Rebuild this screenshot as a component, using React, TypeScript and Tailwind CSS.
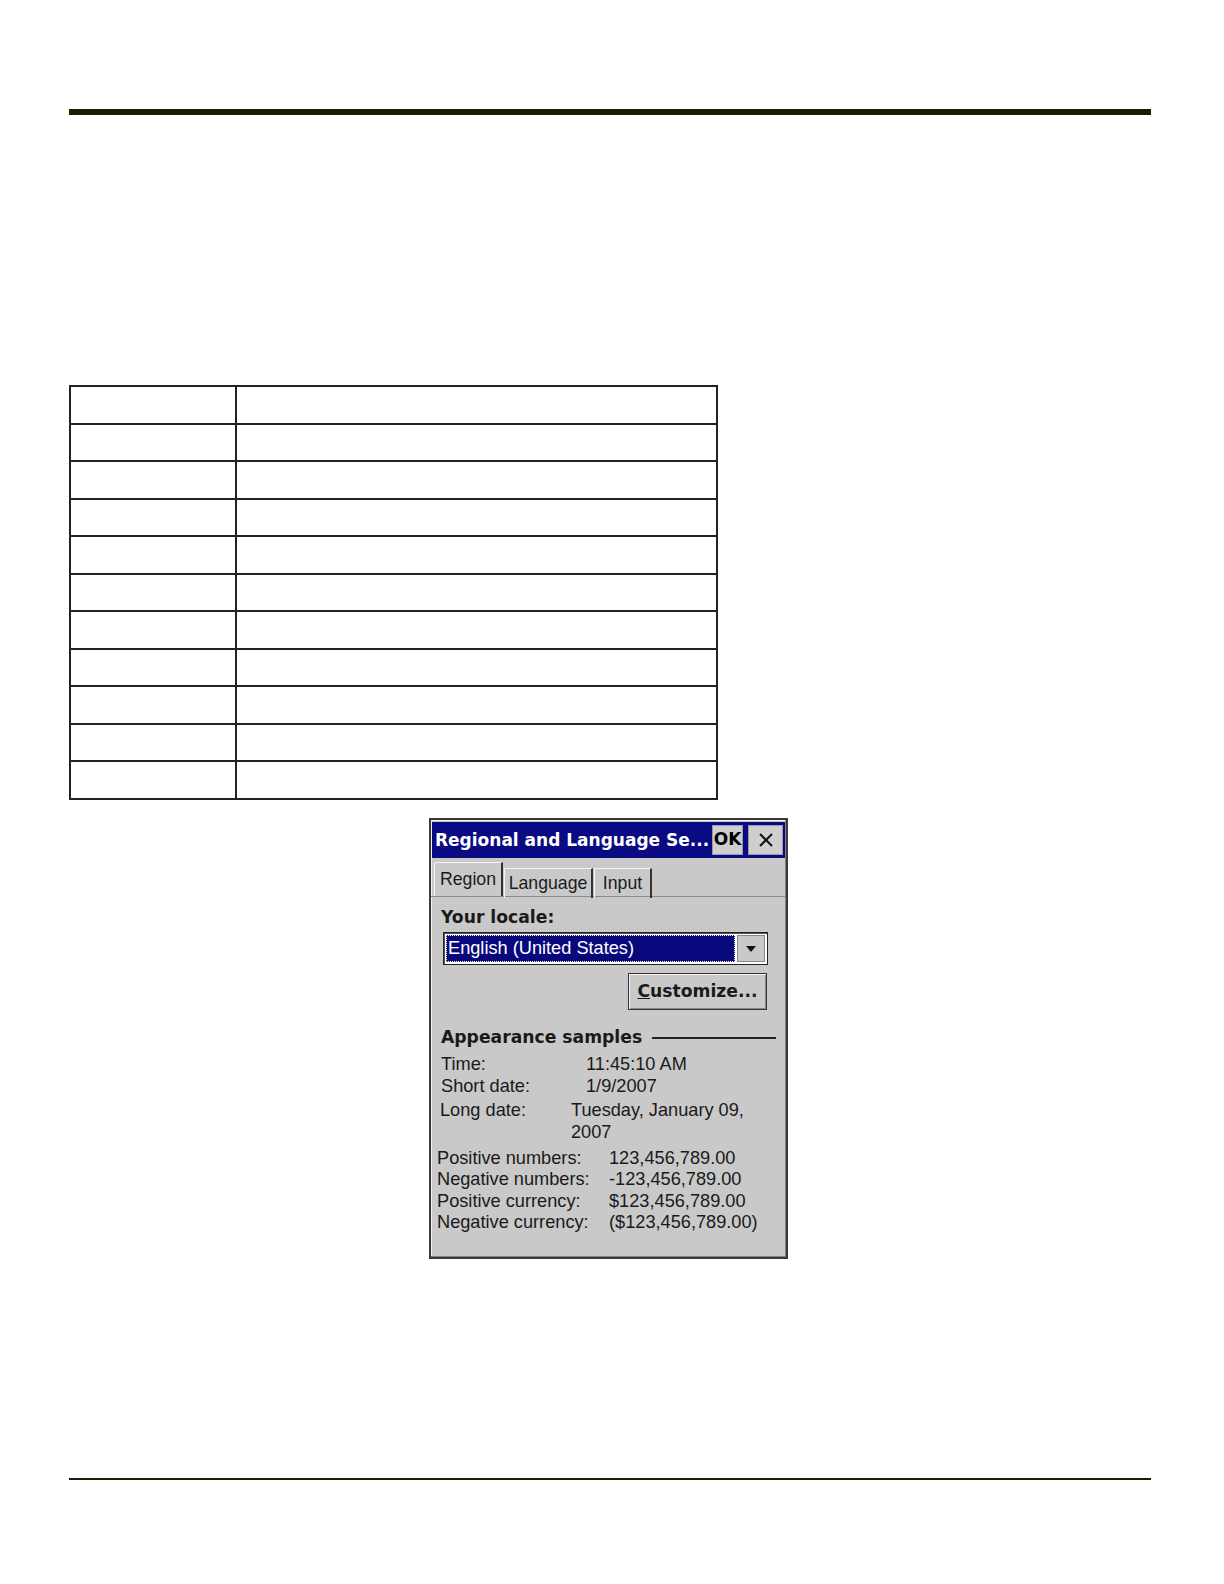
import React from 'react';

const ui = { fontFamily: '"Liberation Sans", Arial, sans-serif' };
const uiBold = { fontFamily: '"DejaVu Sans", Verdana, sans-serif' };

const rows = Array.from({ length: 11 });

const Samples: [string, string][] = [
  ['Positive numbers:', '123,456,789.00'],
  ['Negative numbers:', '-123,456,789.00'],
  ['Positive currency:', '$123,456,789.00'],
  ['Negative currency:', '($123,456,789.00)'],
];

function Dialog() {
  return (
    <div className="w-[359px] h-[441px] ml-[429px] mt-[18px] border-2 border-[#3a3a3a] bg-[#c9c9c9] flex flex-col shadow-[inset_-1px_-1px_0_#808080,inset_1px_1px_0_#f0f0f0]" style={ui}>
      {/* title bar */}
      <div className="mx-[1px] mt-[2px] h-[36px] bg-[#0a0a82] flex items-center pl-[3px] pr-[2px]">
        <div className="flex-1 min-w-0 text-white font-bold text-[17px] leading-none whitespace-nowrap" style={uiBold}>
          Regional and Language Se...
        </div>
        <div className="shrink-0 w-[31px] h-[30px] bg-[#cfcfcf] flex items-center justify-center font-bold text-[17px] text-black border border-[#9a9a9a]" style={uiBold}>OK</div>
        <div className="shrink-0 w-[35px] h-[30px] bg-[#cfcfcf] flex items-center justify-center text-black border border-[#9a9a9a] ml-[5px]">
          <svg width="16" height="16" viewBox="0 0 16 16"><path d="M2 2 L14 14 M14 2 L2 14" stroke="#111" strokeWidth="2" /></svg>
        </div>
      </div>
      {/* tabs */}
      <div className="flex items-end h-[39px] px-[3px] border-b border-[#8a8a8a] text-[17.7px] text-[#1a1a1a]">
        <div className="h-[34px] w-[69px] border-t border-l border-[#f4f4f4] border-r-2 border-r-[#333] flex items-center justify-center rounded-tl-[2px]">Region</div>
        <div className="h-[30px] w-[89px] border-l border-t border-[#f4f4f4] border-r-2 border-r-[#333] flex items-center justify-center mb-[-2px] ml-[1px]">Language</div>
        <div className="h-[30px] w-[58px] border-l border-t border-[#f4f4f4] border-r-2 border-r-[#333] flex items-center justify-center mb-[-2px] ml-[1px]">Input</div>
      </div>
      {/* body */}
      <div className="flex flex-col px-[10px] pt-[10px] text-[18.2px] text-[#1a1a1a]">
        <div className="font-bold text-[17.2px] leading-[21px]" style={uiBold}>Your locale:</div>
        <div className="mt-[4px] h-[33px] w-[325px] ml-[2px] flex border border-[#222] bg-white p-[2px] shadow-[inset_1px_1px_0_#555]">
          <div className="flex-1 bg-[#08087c] text-white outline outline-1 outline-dotted outline-white -outline-offset-1 flex items-center pl-[2px] text-[18.2px]">English (United States)</div>
          <div className="w-[28px] ml-[2px] bg-[#c9c9c9] border border-[#888] flex items-center justify-center">
            <svg width="12" height="8" viewBox="0 0 12 8"><path d="M1 1 H11 L6 7 Z" fill="#111" /></svg>
          </div>
        </div>
        <div className="flex justify-end mt-[8px] pr-[9px]">
          <div className="w-[139px] h-[37px] border border-[#333] shadow-[inset_1px_1px_0_#f4f4f4,inset_-1px_-1px_0_#888] flex items-center justify-center font-bold text-[17.2px]" style={uiBold}>
            <span><span className="underline">C</span>ustomize...</span>
          </div>
        </div>
        <div className="flex items-center mt-[17px] gap-[10px]">
          <span className="font-bold text-[17.2px] leading-[21px]" style={uiBold}>Appearance samples</span>
          <div className="flex-1 h-[2px] bg-[#222]" />
        </div>
        <div className="grid grid-cols-[145px_1fr] mt-[5px] leading-[22px]">
          <span>Time:</span><span>11:45:10 AM</span>
          <span>Short date:</span><span>1/9/2007</span>
        </div>
        <div className="grid grid-cols-[131px_1fr] mt-[3px] leading-[21.5px] -ml-[1px]">
          <span>Long date:</span><span>Tuesday, January 09,<br />2007</span>
        </div>
        <div className="grid grid-cols-[172px_1fr] mt-[5px] leading-[21.3px] -ml-[4px] whitespace-nowrap">
          {Samples.map(([k, v]) => (
            <React.Fragment key={k}>
              <span>{k}</span><span>{v}</span>
            </React.Fragment>
          ))}
        </div>
      </div>
    </div>
  );
}

export default function App() {
  return (
    <div className="w-full bg-white pt-[109px] pb-[90px] flex flex-col">
      <div className="ml-[69px] w-[1082px] h-[6px] bg-[#1c1c04]" />
      <table className="ml-[69px] mt-[270px] w-[649px] h-[415px] border-collapse border-2 border-[#222]">
        <tbody>
          {rows.map((_, i) => (
            <tr key={i}>
              <td className="w-[166px] border-2 border-[#222]" />
              <td className="border-2 border-[#222]" />
            </tr>
          ))}
        </tbody>
      </table>
      <Dialog />
      <div className="ml-[69px] mt-[219px] w-[1082px] h-[2px] bg-[#1c1c04]" />
    </div>
  );
}
